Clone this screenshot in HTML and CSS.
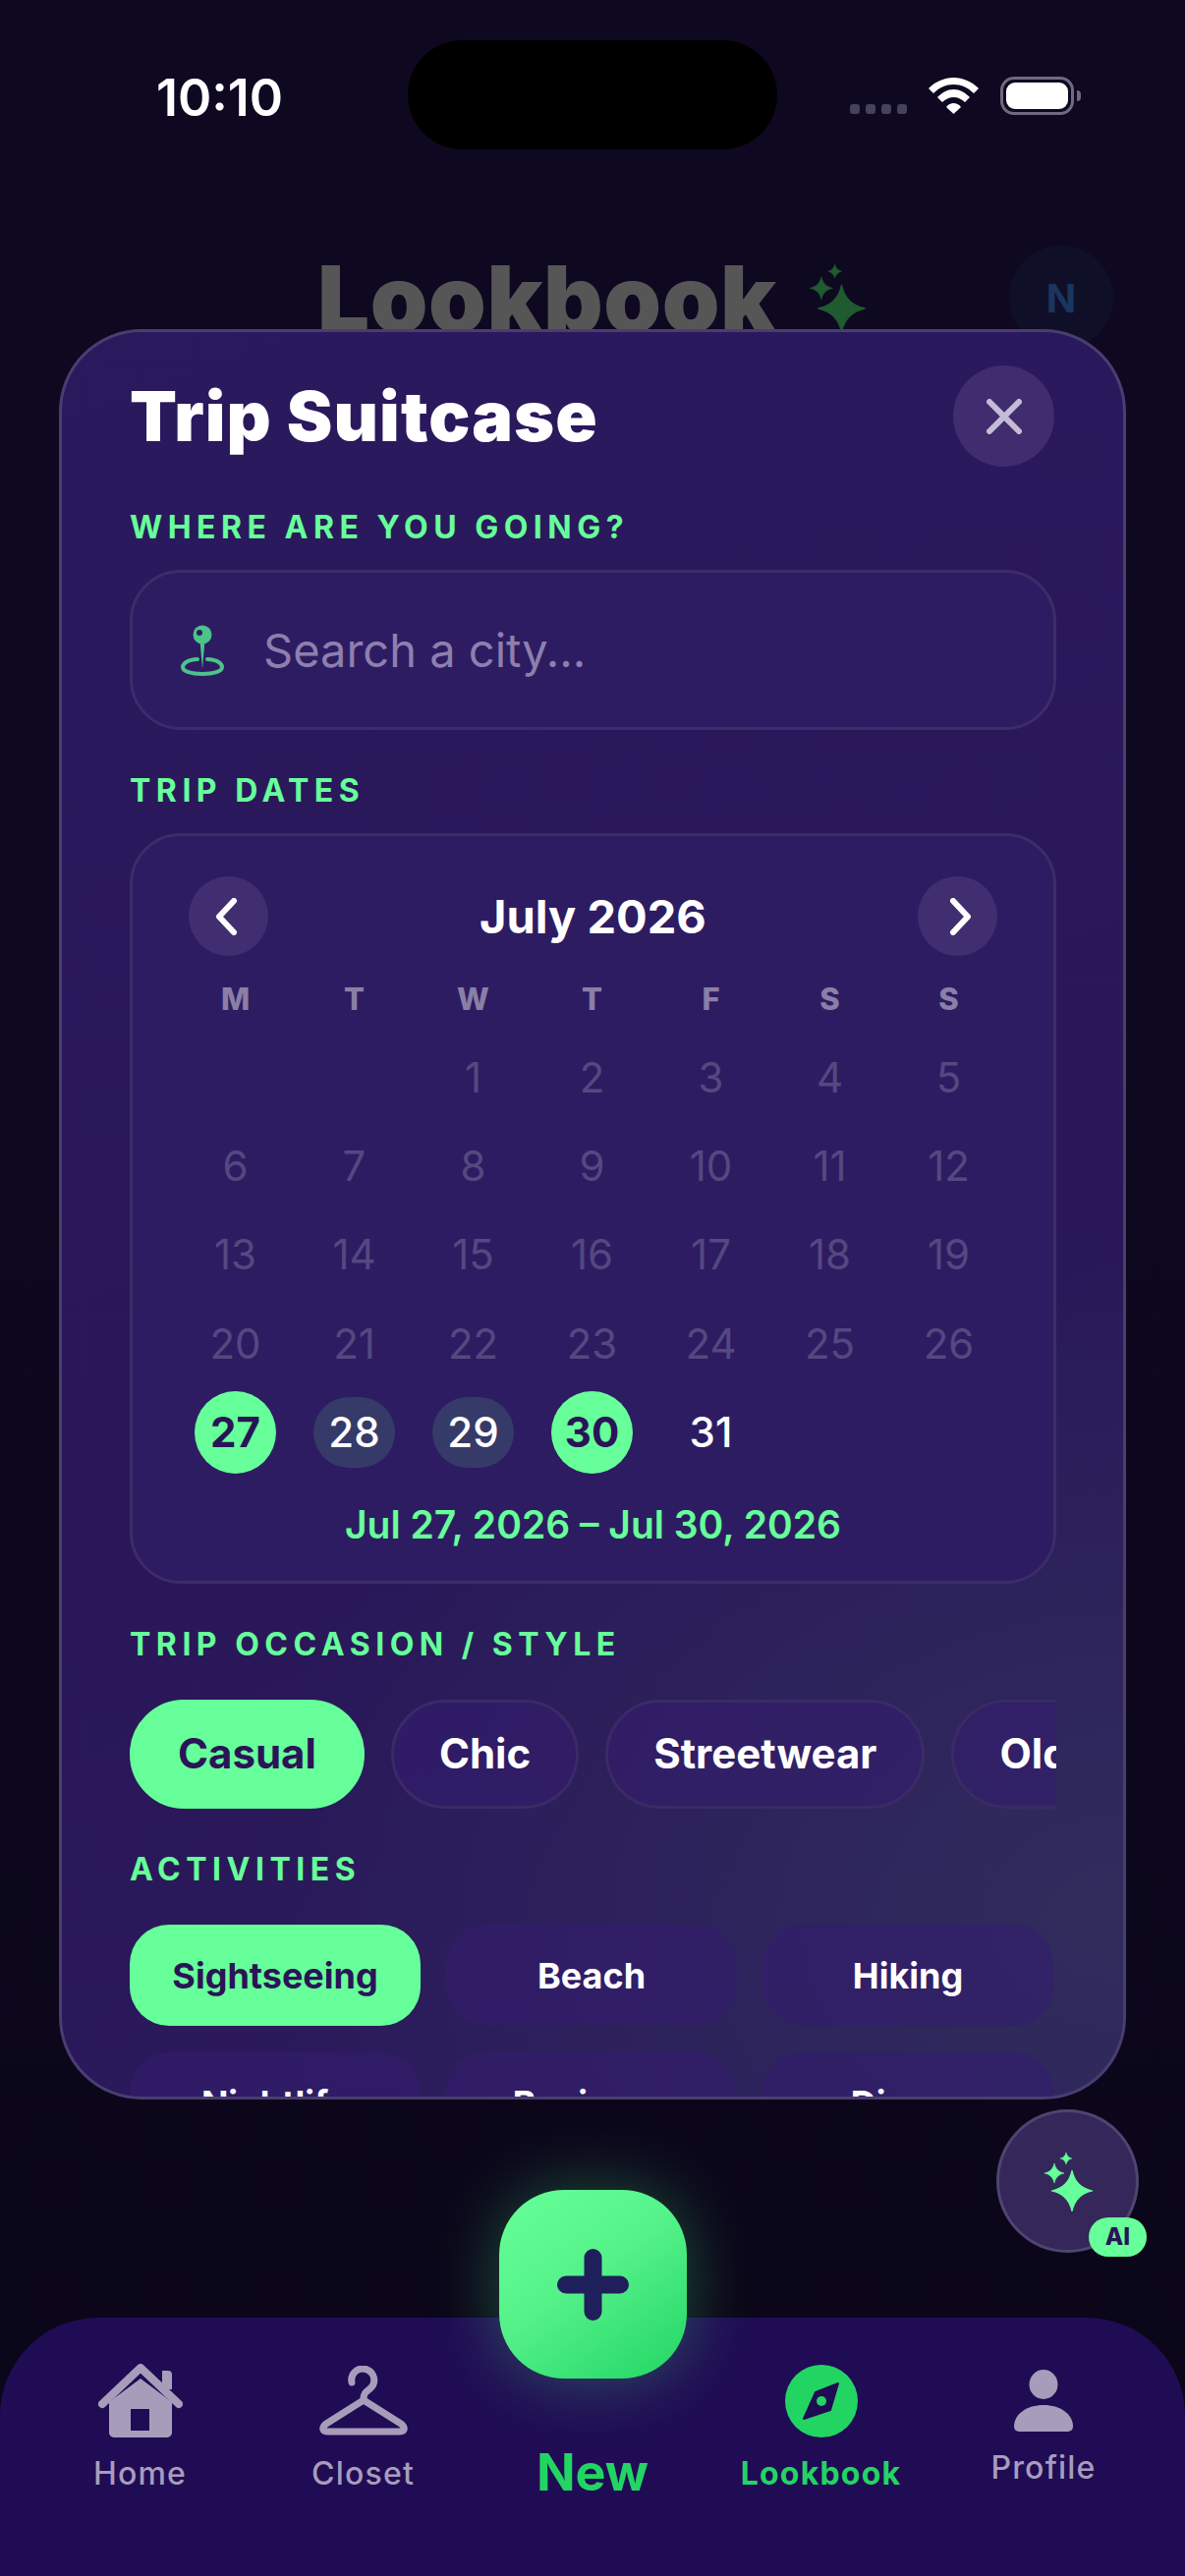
FILE: index.html
```html
<!DOCTYPE html>
<html lang="en">
<head>
  <meta charset="UTF-8" />
  <title>Trip Suitcase</title>
  <link rel="stylesheet" href="styles.css">
</head>
<body>
  <svg class="defs" width="0" height="0">
    <symbol id="star" viewBox="-2 -2 104 104">
      <path stroke-width="3" stroke-linejoin="round" d="M50 0C56 28 72 44 100 50C72 56 56 72 50 100C44 72 28 56 0 50C28 44 44 28 50 0Z" />
    </symbol>
  </svg>

  <div class="screen">
    <div class="status-bar">
      <div class="status-time">10:10</div>
      <div class="island"></div>
      <div class="status-icons">
        <div class="signal"><span></span><span></span><span></span><span></span></div>
        <svg class="wifi" viewBox="0 0 51 37">
          <path d="M0 11C7 4 16 0 25.5 0C35 0 44 4 51 11L46 16C40 10 33 7 25.5 7C18 7 11 10 5 16Z" />
          <path d="M9 20C14 15 19 12 25.5 12C32 12 37 15 42 20L37 25C34 22 30 20 25.5 20C21 20 17 22 14 25Z" />
          <path d="M18 30C20 27 23 26 25.5 26C28 26 31 27 33 30L25.5 37Z" />
        </svg>
        <div class="battery"><div class="battery-fill"></div></div>
      </div>
    </div>

    <div class="app-header">
      <div class="app-title">Lookbook</div>
      <svg class="stars stars-header" viewBox="0 0 60 62">
        <use href="#star" x="8.5" y="19.5" width="43" height="43" />
        <use href="#star" x="1.5" y="12.5" width="21" height="21" />
        <use href="#star" x="17.5" y="1.5" width="13" height="13" />
      </svg>
      <div class="avatar">N</div>
    </div>

    <div class="modal">
      <div class="modal-head">
        <div class="modal-title">Trip Suitcase</div>
        <div class="close-btn">
          <svg viewBox="0 0 36 36" width="36" height="36"><path d="M3 3L33 33M33 3L3 33" /></svg>
        </div>
      </div>

      <div class="section-label">WHERE ARE YOU GOING?</div>
      <div class="search-box">
        <svg class="pin" viewBox="0 0 46 52">
          <path class="pin-ring" d="M18 35C8 35.5 3 39 3 43C3 47.5 12 50 23 50C34 50 43 47.5 43 43C43 39 38 35.5 28 35" />
          <path class="pin-stem" d="M20.5 16H25.5L23 45Z" />
          <circle class="pin-head" cx="23" cy="10" r="9.5" />
          <circle class="pin-hole" cx="20" cy="8" r="3" />
        </svg>
        <span class="search-text">Search a city...</span>
      </div>

      <div class="section-label">TRIP DATES</div>
      <div class="calendar">
        <div class="cal-head">
          <div class="cal-nav">
            <svg class="chevron-prev" viewBox="0 0 24 38" width="24" height="38"><path d="M20 3L5 19L20 35" /></svg>
          </div>
          <div class="cal-month">July 2026</div>
          <div class="cal-nav">
            <svg class="chevron-next" viewBox="0 0 24 38" width="24" height="38"><path d="M4 3L19 19L4 35" /></svg>
          </div>
        </div>
        <div class="cal-weekdays">
          <span>M</span><span>T</span><span>W</span><span>T</span><span>F</span><span>S</span><span>S</span>
        </div>
        <div class="cal-days">
          <div class="day day-past day-first"><span>1</span></div>
          <div class="day day-past"><span>2</span></div>
          <div class="day day-past"><span>3</span></div>
          <div class="day day-past"><span>4</span></div>
          <div class="day day-past"><span>5</span></div>
          <div class="day day-past"><span>6</span></div>
          <div class="day day-past"><span>7</span></div>
          <div class="day day-past"><span>8</span></div>
          <div class="day day-past"><span>9</span></div>
          <div class="day day-past"><span>10</span></div>
          <div class="day day-past"><span>11</span></div>
          <div class="day day-past"><span>12</span></div>
          <div class="day day-past"><span>13</span></div>
          <div class="day day-past"><span>14</span></div>
          <div class="day day-past"><span>15</span></div>
          <div class="day day-past"><span>16</span></div>
          <div class="day day-past"><span>17</span></div>
          <div class="day day-past"><span>18</span></div>
          <div class="day day-past"><span>19</span></div>
          <div class="day day-past"><span>20</span></div>
          <div class="day day-past"><span>21</span></div>
          <div class="day day-past"><span>22</span></div>
          <div class="day day-past"><span>23</span></div>
          <div class="day day-past"><span>24</span></div>
          <div class="day day-past"><span>25</span></div>
          <div class="day day-past"><span>26</span></div>
          <div class="day day-end"><span>27</span></div>
          <div class="day day-range"><span>28</span></div>
          <div class="day day-range"><span>29</span></div>
          <div class="day day-end"><span>30</span></div>
          <div class="day"><span>31</span></div>
        </div>
        <div class="cal-summary">Jul 27, 2026 – Jul 30, 2026</div>
      </div>

      <div class="section-label">TRIP OCCASION / STYLE</div>
      <div class="chip-row">
        <div class="chip chip-on">Casual</div>
        <div class="chip">Chic</div>
        <div class="chip">Streetwear</div>
        <div class="chip">Old Money</div>
      </div>

      <div class="section-label">ACTIVITIES</div>
      <div class="activity-grid">
        <div class="activity activity-on">Sightseeing</div>
        <div class="activity">Beach</div>
        <div class="activity">Hiking</div>
        <div class="activity">Nightlife</div>
        <div class="activity">Business</div>
        <div class="activity">Dinner</div>
      </div>
    </div>

    <div class="ai-btn">
      <svg class="stars stars-ai" viewBox="0 0 60 62">
        <use href="#star" x="8.5" y="19.5" width="43" height="43" />
        <use href="#star" x="1.5" y="12.5" width="21" height="21" />
        <use href="#star" x="17.5" y="1.5" width="13" height="13" />
      </svg>
      <div class="ai-badge">AI</div>
    </div>

    <div class="tab-bar">
      <div class="tab">
        <div class="tab-icon">
          <svg class="icon-fill" viewBox="0 0 86 75" width="86" height="75">
            <path fill-rule="evenodd" d="M43 15L75 39V70a5 5 0 0 1-5 5H16a5 5 0 0 1-5-5V39ZM33 46V68H52V46Z" />
            <path d="M65 7h6a4 4 0 0 1 4 4V26H65Z" />
            <path class="roof" d="M4 41L43 4L82 41" />
          </svg>
        </div>
        <div class="tab-label">Home</div>
      </div>
      <div class="tab">
        <div class="tab-icon">
          <svg class="hanger" viewBox="0 0 90 72" width="90" height="72">
            <path d="M33 17A11.5 11.5 0 1 1 52 23C47 27 45 28 45 34" />
            <path d="M45 35L7 59C2 63 3 67 8 67H82C87 67 88 63 83 59Z" />
          </svg>
        </div>
        <div class="tab-label">Closet</div>
      </div>
      <div class="tab tab-new">
        <div class="new-btn">
          <svg viewBox="0 0 73 73" width="73" height="73"><path d="M36.5 9V64M9 36.5H64" /></svg>
        </div>
        <div class="new-label">New</div>
      </div>
      <div class="tab tab-on">
        <div class="tab-icon">
          <svg viewBox="0 0 74 74" width="74" height="74">
            <circle class="compass-bg" cx="37" cy="37" r="37" />
            <path class="compass-needle" d="M54 19L46 46L19 55L31 28Z" />
            <circle class="compass-bg" cx="37" cy="37" r="5" />
          </svg>
        </div>
        <div class="tab-label">Lookbook</div>
      </div>
      <div class="tab tab-profile">
        <div class="tab-icon">
          <svg class="icon-fill" viewBox="0 0 60 63" width="60" height="63">
            <ellipse cx="30" cy="15" rx="14.5" ry="15" />
            <path d="M0 58C0 45 13 36 30 36C47 36 60 45 60 58a5 5 0 0 1-5 5H5a5 5 0 0 1-5-5Z" />
          </svg>
        </div>
        <div class="tab-label">Profile</div>
      </div>
    </div>
  </div>
</body>
</html>
```

FILE: styles.css
```css
:root {
  --green: #66ff99;
  --green-dark: #22d563;
  --ink: #2a1458;
  --muted: #a79dbb;
  --font: Inter, "Noto Sans", sans-serif;
}

* {
  box-sizing: border-box;
}

body {
  margin: 0;
  font-family: var(--font);
  background-color: #0b0619;
}

.defs {
  display: block;
  height: 0;
}

.screen {
  position: relative;
  width: 1206px;
  height: 2622px;
  display: flex;
  flex-direction: column;
  overflow: hidden;
  background: linear-gradient(180deg, #0e0820 0%, #0e0820 40%, #0a0618 100%);
}

/* status bar */
.status-bar {
  display: flex;
  align-items: flex-start;
  padding: 41px 0 0 159px;
}

.status-time {
  width: 256px;
  height: 111px;
  padding-top: 24px;
  font-size: 52px;
  line-height: 70px;
  font-weight: 600;
  color: #fff;
}

.island {
  width: 376px;
  height: 111px;
  border-radius: 56px;
  background-color: #000;
}

.status-icons {
  display: flex;
  align-items: flex-end;
  margin: 37px 0 0 74px;
  height: 39px;
}

.signal {
  display: flex;
  gap: 6px;
  width: 58px;
  margin-bottom: 1px;
}

.signal span {
  width: 10px;
  height: 10px;
  border-radius: 3px;
  background-color: #46415c;
}

.wifi {
  width: 51px;
  height: 37px;
  margin: 0 0 1px 22px;
  fill: #fff;
}

.battery {
  position: relative;
  width: 75px;
  height: 39px;
  margin-left: 22px;
  padding: 3px;
  border: 3px solid #6e6a80;
  border-radius: 14px;
}

.battery::after {
  content: "";
  position: absolute;
  right: -10px;
  top: 11px;
  width: 4px;
  height: 11px;
  border-radius: 0 4px 4px 0;
  background-color: #6e6a80;
}

.battery-fill {
  height: 100%;
  border-radius: 9px;
  background-color: #fff;
}

/* page header behind the sheet */
.app-header {
  display: flex;
  align-items: flex-start;
  margin-top: 98px;
  padding-left: 323px;
}

.app-title {
  width: 499px;
  font-size: 94px;
  line-height: 108px;
  font-weight: 900;
  letter-spacing: 0.6px;
  color: #565656;
}

.stars-header {
  width: 69px;
  height: 71px;
  margin-top: 17px;
  fill: #1f5a30;
  stroke: #1f5a30;
}

.avatar {
  display: flex;
  align-items: center;
  justify-content: center;
  width: 106px;
  height: 106px;
  margin-left: 136px;
  border-radius: 50%;
  background-color: #0f1028;
  font-size: 40px;
  font-weight: 700;
  color: #1a3560;
}

/* sheet */
.modal {
  position: absolute;
  left: 60px;
  top: 335px;
  width: 1086px;
  height: 1802px;
  padding: 34px 68px 0 69px;
  border: 3px solid #4a3d70;
  border-radius: 84px;
  overflow: hidden;
  background:
    radial-gradient(900px 700px at 100% 90%, #302d5c 0%, rgba(48, 45, 92, 0) 100%),
    linear-gradient(160deg, #2b195e 0%, #291759 60%, #2b1a5c 100%);
}

.modal-head {
  display: flex;
  align-items: center;
  justify-content: space-between;
}

.modal-title {
  font-size: 70px;
  line-height: 80px;
  font-weight: 900;
  letter-spacing: 1.1px;
  color: #fff;
}

.close-btn {
  display: flex;
  align-items: center;
  justify-content: center;
  width: 103px;
  height: 103px;
  margin-right: 2px;
  border-radius: 50%;
  background-color: #402c6e;
}

.close-btn path {
  fill: none;
  stroke: #c4bcd6;
  stroke-width: 6;
  stroke-linecap: round;
}

.section-label {
  margin: 42px 0 23px;
  font-size: 32px;
  line-height: 40px;
  font-weight: 700;
  letter-spacing: 5.5px;
  color: var(--green);
}

.search-box {
  display: flex;
  align-items: center;
  height: 163px;
  padding-left: 48px;
  border: 3px solid #3d2c69;
  border-radius: 52px;
  background-color: #2e1c62;
}

.pin {
  width: 46px;
  height: 52px;
  margin-right: 39px;
}

.pin-ring {
  fill: none;
  stroke: #4cc38a;
  stroke-width: 4;
  stroke-linecap: round;
}

.pin-stem,
.pin-head {
  fill: #4cc38a;
}

.pin-hole {
  fill: #2e1c62;
}

.search-text {
  font-size: 47px;
  color: #8d7fae;
}

/* calendar */
.calendar {
  height: 764px;
  padding: 41px 44px 0;
  border: 3px solid #3d2c69;
  border-radius: 52px;
  background-color: #2e1c62;
}

.cal-head {
  display: flex;
  align-items: center;
  justify-content: space-between;
  padding: 0 13px;
}

.cal-nav {
  display: flex;
  align-items: center;
  justify-content: center;
  width: 81px;
  height: 81px;
  border-radius: 50%;
  background-color: #402e70;
}

.cal-nav path {
  fill: none;
  stroke: #fff;
  stroke-width: 6;
  stroke-linecap: round;
  stroke-linejoin: round;
}

.chevron-prev {
  margin-right: 6px;
}

.chevron-next {
  margin-left: 6px;
}

.cal-month {
  font-size: 47px;
  font-weight: 700;
  color: #fff;
}

.cal-weekdays {
  display: grid;
  grid-template-columns: repeat(7, 121px);
  margin-top: 19px;
  font-size: 31px;
  line-height: 50px;
  font-weight: 800;
  text-align: center;
  color: #8a7fa6;
}

.cal-days {
  display: grid;
  grid-template-columns: repeat(7, 121px);
  grid-auto-rows: 90.4px;
  margin-top: 9px;
}

.day {
  display: flex;
  align-items: center;
  justify-content: center;
  font-size: 42px;
  font-weight: 500;
  color: #fff;
}

.day span {
  display: flex;
  align-items: center;
  justify-content: center;
  width: 83px;
  height: 72px;
  border-radius: 36px;
}

.day-first {
  grid-column-start: 3;
}

.day-past {
  font-weight: 400;
  color: #544880;
}

.day-range span {
  background-color: #363a68;
}

.day-end {
  font-weight: 700;
  color: var(--ink);
}

.day-end span {
  height: 84px;
  border-radius: 50%;
  background-color: var(--green);
}

.cal-summary {
  margin-top: 25px;
  font-size: 39px;
  line-height: 48px;
  font-weight: 600;
  text-align: center;
  color: var(--green);
}

/* occasion chips */
.chip-row {
  display: flex;
  gap: 27px;
  overflow: hidden;
}

.section-label + .chip-row,
.section-label + .activity-grid {
  margin-top: 36px;
}

.chip {
  flex: none;
  height: 111px;
  padding: 0 46px;
  border: 3px solid #3b2a66;
  border-radius: 56px;
  font-size: 42px;
  line-height: 104px;
  font-weight: 700;
  color: #fff;
  background-color: rgba(52, 28, 110, 0.6);
}

.chip-on {
  border-color: var(--green);
  background-color: var(--green);
  color: var(--ink);
}

/* activities */
.activity-grid {
  display: grid;
  grid-template-columns: repeat(3, 296px);
  grid-auto-rows: 103px;
  gap: 27px 26px;
}

.activity {
  display: flex;
  align-items: center;
  justify-content: center;
  border-radius: 40px;
  font-size: 36px;
  font-weight: 700;
  color: #fff;
  background-color: rgba(52, 28, 110, 0.6);
}

.activity-on {
  background-color: var(--green);
  color: var(--ink);
}

/* floating ai button */
.ai-btn {
  position: absolute;
  left: 1014px;
  top: 2147px;
  display: flex;
  align-items: center;
  justify-content: center;
  width: 145px;
  height: 146px;
  border: 3px solid #4f4570;
  border-radius: 50%;
  background-color: #35275a;
}

.stars-ai {
  width: 60px;
  height: 62px;
  margin-left: 8px;
  fill: var(--green);
  stroke: var(--green);
}

.ai-badge {
  position: absolute;
  left: 91px;
  top: 107px;
  width: 59px;
  height: 40px;
  border-radius: 20px;
  font-size: 24px;
  line-height: 40px;
  font-weight: 800;
  text-align: center;
  color: var(--ink);
  background-color: var(--green);
}

/* tab bar */
.tab-bar {
  display: grid;
  grid-template-columns: 225px 229px 238px 227px 226px;
  height: 263px;
  margin-top: auto;
  padding: 47px 0 0 30px;
  border-radius: 100px 100px 0 0;
  background-color: #200c54;
}

.tab {
  display: flex;
  flex-direction: column;
  align-items: center;
}

.tab-icon {
  display: flex;
  align-items: center;
  justify-content: center;
  height: 75px;
}

.tab-label {
  margin-top: 17px;
  font-size: 32px;
  line-height: 40px;
  font-weight: 500;
  letter-spacing: 1.2px;
  color: var(--muted);
}

.tab-profile .tab-label {
  margin-top: 11px;
}

.tab-on .tab-label {
  font-weight: 700;
  color: var(--green-dark);
}

.icon-fill {
  fill: var(--muted);
}

.roof {
  fill: none;
  stroke: var(--muted);
  stroke-width: 8;
  stroke-linecap: round;
  stroke-linejoin: round;
}

.hanger path {
  fill: none;
  stroke: var(--muted);
  stroke-width: 7;
  stroke-linecap: round;
  stroke-linejoin: round;
}

.compass-bg {
  fill: var(--green-dark);
}

.compass-needle {
  fill: #200c54;
  stroke: #200c54;
  stroke-width: 2;
  stroke-linejoin: round;
}

.new-btn {
  position: relative;
  display: flex;
  align-items: center;
  justify-content: center;
  flex: none;
  width: 191px;
  height: 192px;
  margin-top: -177px;
  border-radius: 66px;
  background: linear-gradient(145deg, #66ff99 0%, #55f28a 45%, #22d563 100%);
  box-shadow: 0 0 70px rgba(80, 255, 140, 0.3);
}

.new-btn path {
  fill: none;
  stroke: #1f1f5c;
  stroke-width: 18;
  stroke-linecap: round;
}

.new-label {
  margin-top: 66px;
  font-size: 52px;
  line-height: 60px;
  font-weight: 700;
  color: var(--green-dark);
}
```
